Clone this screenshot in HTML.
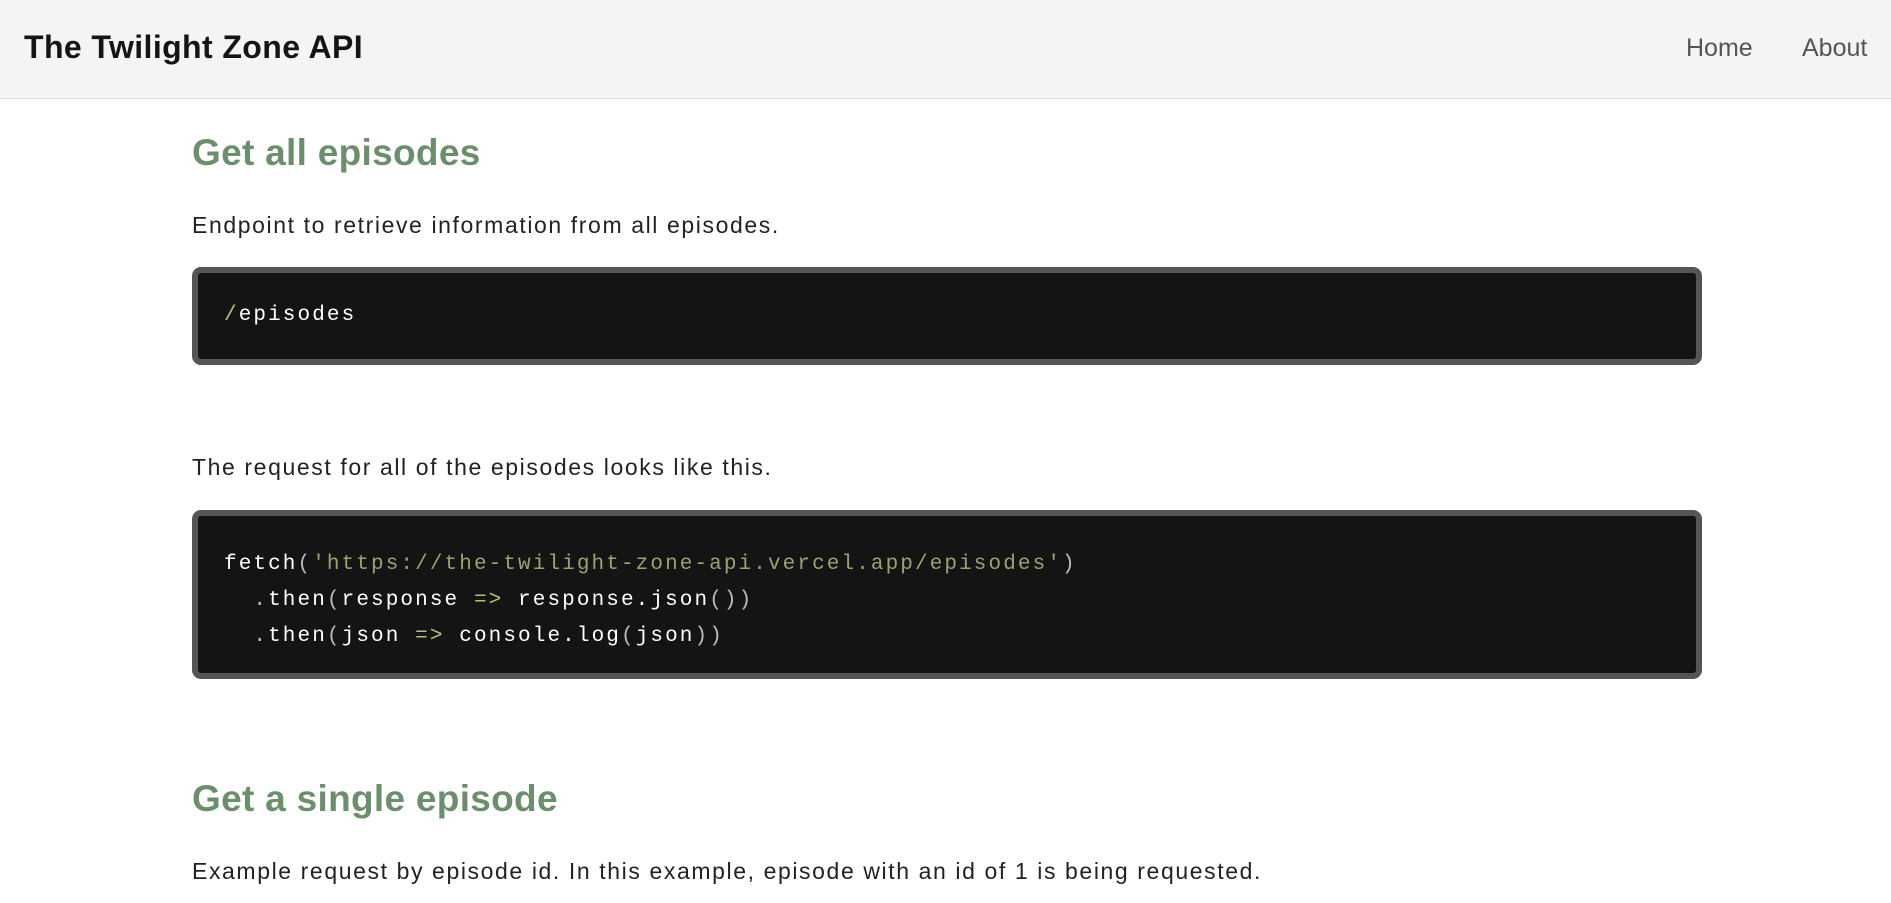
<!DOCTYPE html>
<html><head><meta charset="utf-8"><style>
*{margin:0;padding:0;box-sizing:border-box}
body{width:1891px;height:903px;overflow:hidden;background:#fff;font-family:"Liberation Sans","DejaVu Sans",sans-serif;color:#222}
header{height:99px;background:#f4f4f4;border-bottom:1px solid #ddd;position:relative}
header h1{position:absolute;left:24px;top:29px;font-size:32px;font-weight:bold;color:#151515;letter-spacing:0.4px}
nav a{position:absolute;top:34px;font-size:25px;color:#555;text-decoration:none;font-weight:300}
.main{position:absolute;left:192px;top:0;width:1510px}
h2{position:absolute;font-size:37px;color:#6a8f6a;font-weight:bold;letter-spacing:0.3px;white-space:nowrap}
p{position:absolute;font-size:23px;color:#222;letter-spacing:1.6px;white-space:nowrap}
.code{position:absolute;left:0;width:1510px;background:#141414;border:6px solid #555;border-radius:9px;font-family:"Liberation Mono",monospace;font-size:21px;letter-spacing:2.1px;color:#fff;padding-left:26px;white-space:pre}
.s{color:#98a46c}.g{color:#b5c46e}.d{color:#bbb}
</style></head><body>
<header><h1>The Twilight Zone API</h1>
<nav><a style="left:1686px">Home</a><a style="left:1802px">About</a></nav></header>
<div class="main">
<h2 style="top:132px">Get all episodes</h2>
<p style="top:212px">Endpoint to retrieve information from all episodes.</p>
<div class="code" style="top:267px;height:98px;line-height:86px"><span class="g">/</span>episodes</div>
<p style="top:454px">The request for all of the episodes looks like this.</p>
<div class="code" style="top:510px;height:169px;padding-top:31px;line-height:36px">fetch<span class="d">(</span><span class="s">'https://the-twilight-zone-api.vercel.app/episodes'</span><span class="d">)</span>
  <span class="d">.</span>then<span class="d">(</span>response <span class="g">=&gt;</span> response.json<span class="d">())</span>
  <span class="d">.</span>then<span class="d">(</span>json <span class="g">=&gt;</span> console.log<span class="d">(</span>json<span class="d">))</span></div>
<h2 style="top:778px">Get a single episode</h2>
<p style="top:858px">Example request by episode id. In this example, episode with an id of 1 is being requested.</p>
</div>
</body></html>
